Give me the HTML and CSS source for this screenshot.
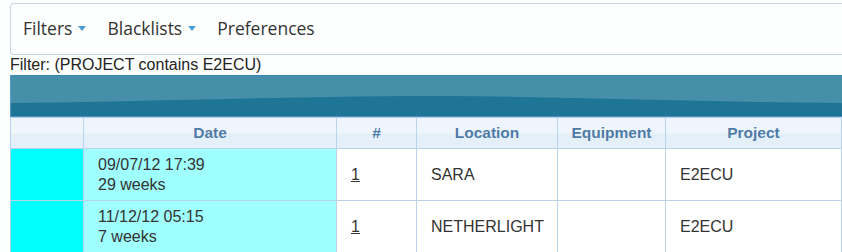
FILE: index.html
```html
<!DOCTYPE html>
<html lang="en">
<head>
    <meta charset="UTF-8">
    <title>Tickets</title>
    <link rel="stylesheet" href="styles.css">
</head>
<body>

<div class="page">
    <div class="navbar">
        <span class="nav-item">Filters <span class="caret"></span></span>
        <span class="nav-item">Blacklists <span class="caret"></span></span>
        <span class="nav-item">Preferences</span>
    </div>

    <div class="filter-line">Filter: (PROJECT contains E2ECU)</div>

    <div class="banner">
        <svg class="wave" viewBox="0 0 840 40" preserveAspectRatio="none">
            <path d="M0 27 C 120 26, 280 20, 420 20 C 560 21, 700 27, 840 27 L 840 40 L 0 40 Z" fill="#1f7596"/>
        </svg>
    </div>

    <table class="grid">
        <thead>
            <tr>
                <th class="c-flag"></th>
                <th class="c-date">Date</th>
                <th class="c-num">#</th>
                <th class="c-loc">Location</th>
                <th class="c-eq">Equipment</th>
                <th class="c-proj">Project</th>
            </tr>
        </thead>
        <tbody>
            <tr>
                <td class="flag"></td>
                <td class="date">09/07/12 17:39<br>29 weeks</td>
                <td><a href="#">1</a></td>
                <td>SARA</td>
                <td></td>
                <td>E2ECU</td>
            </tr>
            <tr>
                <td class="flag"></td>
                <td class="date">11/12/12 05:15<br>7 weeks</td>
                <td><a href="#">1</a></td>
                <td>NETHERLIGHT</td>
                <td></td>
                <td>E2ECU</td>
            </tr>
        </tbody>
    </table>
</div>

</body>
</html>
```

FILE: styles.css
```css
html, body { margin: 0; overflow: hidden; background: #fdfefe; }
body { font-family: "Liberation Sans", Arial, sans-serif; font-size: 14px; color: #333; }
.page { width: 860px; padding: 3px 0 0 10px; }

.navbar {
    height: 47px;
    padding: 0 0 3px 12px;
    border: 1px solid #c5d3df;
    border-right: none;
    border-radius: 4px 0 0 4px;
    background: #fdfefe;
    display: flex;
    align-items: center;
    font-family: "Open Sans", sans-serif;
    font-size: 17.5px;
    color: #333;
}
.nav-item { margin-right: 21px; display: flex; align-items: center; }
.caret {
    display: inline-block;
    margin-left: 6px;
    margin-top: 2px;
    width: 0;
    height: 0;
    border-left: 4px solid transparent;
    border-right: 4px solid transparent;
    border-top: 5px solid #4a9cd6;
}

.filter-line { height: 20px; line-height: 19px; font-size: 16px; color: #222; }

.banner {
    height: 40px;
    background: #468fa9;
    border-top: 1px solid #3b86b8;
    border-bottom: 1px solid #4d8cc0;
    border-left: 1px solid #5a9acb;
    position: relative;
}
.wave { position: absolute; left: 0; top: 0; width: 100%; height: 100%; display: block; }

.grid { border-collapse: collapse; table-layout: fixed; width: 832px; }
.grid th, .grid td { border: 1px solid #b8d3ea; }
.grid th {
    height: 30px;
    padding: 0;
    font-size: 15.5px;
    font-weight: bold;
    color: #4d7aa6;
    text-shadow: 0 0 1px #ffffff;
    background: linear-gradient(#eef5fc 0, #eef5fc 48%, #e2eef9 52%, #e6f0fa 100%);
}
.c-flag { width: 72px; }
.c-date { width: 252px; }
.c-num { width: 79px; }
.c-loc { width: 140px; }
.c-eq { width: 107px; }
.grid tbody tr { height: 52px; }
.grid td {
    padding: 0 14px;
    font-size: 16px;
    line-height: 20px;
    color: #333;
    background: #fff;
}
.grid td.flag { background: #00ffff; }
.grid td.date { background: #a0ffff; padding-left: 14px; }
.grid td a { color: #333; }
```
